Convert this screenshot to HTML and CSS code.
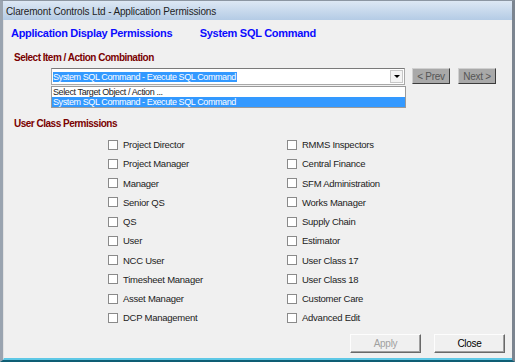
FILE: index.html
```html
<!DOCTYPE html>
<html>
<head>
    <meta charset="UTF-8">
    <title>Application Permissions</title>
    <link rel="stylesheet" href="styles.css">
</head>
<body>
    <div class="window">
        <div class="titlebar">Claremont Controls Ltd - Application Permissions</div>
        <div class="client">
            <div class="header">
                <span class="header-title">Application Display Permissions</span>
                <span class="header-item">System SQL Command</span>
            </div>

            <div class="section-label">Select Item / Action Combination</div>
            <div class="combo-row">
                <div class="combo-wrap">
                    <div class="combo">
                        <span class="combo-text"><span class="sel">System SQL Command - Execute SQL Command</span></span>
                        <span class="combo-arrow"><span class="arrow"></span></span>
                    </div>
                    <div class="dropdown">
                        <div class="option">Select Target Object / Action ...</div>
                        <div class="option selected">System SQL Command - Execute SQL Command</div>
                    </div>
                </div>
                <button class="nav-btn prev">&lt; Prev</button>
                <button class="nav-btn">Next &gt;</button>
            </div>

            <div class="section-label perms-label">User Class Permissions</div>
            <div class="perms">
                <label class="check"><span class="box"></span>Project Director</label>
                <label class="check"><span class="box"></span>RMMS Inspectors</label>
                <label class="check"><span class="box"></span>Project Manager</label>
                <label class="check"><span class="box"></span>Central Finance</label>
                <label class="check"><span class="box"></span>Manager</label>
                <label class="check"><span class="box"></span>SFM Administration</label>
                <label class="check"><span class="box"></span>Senior QS</label>
                <label class="check"><span class="box"></span>Works Manager</label>
                <label class="check"><span class="box"></span>QS</label>
                <label class="check"><span class="box"></span>Supply Chain</label>
                <label class="check"><span class="box"></span>User</label>
                <label class="check"><span class="box"></span>Estimator</label>
                <label class="check"><span class="box"></span>NCC User</label>
                <label class="check"><span class="box"></span>User Class 17</label>
                <label class="check"><span class="box"></span>Timesheet Manager</label>
                <label class="check"><span class="box"></span>User Class 18</label>
                <label class="check"><span class="box"></span>Asset Manager</label>
                <label class="check"><span class="box"></span>Customer Care</label>
                <label class="check"><span class="box"></span>DCP Management</label>
                <label class="check"><span class="box"></span>Advanced Edit</label>
            </div>

            <div class="footer">
                <button class="btn" disabled>Apply</button>
                <button class="btn">Close</button>
            </div>
        </div>
    </div>
</body>
</html>
```

FILE: styles.css
```css
body {
    margin: 0;
    background-color: #f0f0f0;
    font-family: "Liberation Sans", Arial, sans-serif;
    font-size: 9.5px;
    letter-spacing: -0.25px;
    color: #000;
}
.window {
    width: 515px;
    height: 362px;
    box-sizing: border-box;
    border-left: 3px solid #9aa4b0;
    border-top: 1px solid #8c96a2;
    border-right: 3px solid #7c8590;
    border-bottom: 2px solid #0e5e74;
    display: flex;
    flex-direction: column;
    background-color: #f0f0f0;
}
.titlebar {
    height: 19px;
    line-height: 21px;
    padding-left: 3px;
    font-size: 10px;
    letter-spacing: -0.15px;
    color: #1e1e1e;
    background: linear-gradient(#dde8f4, #b4cbe5);
}
.client {
    flex: 1;
    border-left: 1px solid #e2e2e2;
    border-bottom: 2px solid #5ec8e6;
    padding: 0 6px 0 7px;
    position: relative;
}
.header {
    height: 27px;
    padding-top: 7px;
    box-sizing: border-box;
    font-size: 11px;
    letter-spacing: -0.3px;
    font-weight: bold;
    color: #0b0bff;
}
.header-title {
    display: inline-block;
    width: 186px;
}
.section-label {
    font-size: 10px;
    letter-spacing: -0.5px;
    font-weight: bold;
    color: #7a0000;
    padding-left: 3px;
    height: 21px;
    line-height: 21px;
}
.combo-row {
    display: flex;
    align-items: flex-start;
    padding-left: 40px;
    height: 47px;
}
.combo-wrap {
    width: 354px;
}
.combo {
    display: flex;
    align-items: center;
    height: 15px;
    background: #fff;
    border: 1px solid #a8a8a8;
    border-top-color: #7a7a7a;
    padding-left: 1px;
    font-size: 9px;
    letter-spacing: -0.4px;
}
.combo-text {
    flex: 1;
}
.sel {
    background: #3399ff;
    color: #fff;
    padding-right: 1px;
}
.combo-arrow {
    width: 13px;
    height: 13px;
    margin-right: 1px;
    border: 1px solid #c8c8c8;
    box-sizing: border-box;
    background: #f4f4f4;
    display: flex;
    align-items: center;
    justify-content: center;
}
.arrow {
    width: 0;
    height: 0;
    border-left: 3px solid transparent;
    border-right: 3px solid transparent;
    border-top: 3px solid #000;
}
.dropdown {
    margin-top: 1px;
    border: 1px solid #9a9a9a;
    background: #fff;
    width: 353px;
    font-size: 9px;
    letter-spacing: -0.4px;
}
.option {
    height: 10px;
    line-height: 10px;
    padding-left: 1px;
    color: #222;
}
.option.selected {
    background: #3399ff;
    color: #fff;
}
.nav-btn {
    margin-left: 8px;
    width: 38px;
    height: 16px;
    padding: 0;
    font-family: "Liberation Sans", Arial, sans-serif;
    font-size: 10px;
    letter-spacing: -0.3px;
    color: #555;
    background: #a9a9a9;
    border: 1px solid;
    border-color: #d0d0d0 #3c3c3c #3c3c3c #d0d0d0;
}
.prev {
    margin-left: 7px;
}
.perms-label {
    height: 17px;
    line-height: 17px;
}
.perms {
    display: grid;
    grid-template-columns: 179px 179px;
    grid-auto-rows: 19.25px;
    padding-left: 97px;
    padding-top: 3px;
}
.check {
    display: flex;
    align-items: center;
    color: #222;
}
.box {
    width: 8px;
    height: 8px;
    background: #fff;
    border: 1px solid #8a8a8a;
    margin-right: 5px;
}
.footer {
    position: absolute;
    right: 7px;
    bottom: 5px;
    display: flex;
    gap: 13px;
}
.btn {
    width: 71px;
    height: 19px;
    padding: 0;
    font-family: "Liberation Sans", Arial, sans-serif;
    font-size: 10px;
    letter-spacing: -0.3px;
    color: #000;
    background: #f0f0f0;
    border: 1px solid;
    border-color: #fdfdfd #696969 #696969 #fdfdfd;
    box-shadow: inset -1px -1px 0 #a0a0a0;
}
.btn:disabled {
    color: #a0a0a0;
}
```
